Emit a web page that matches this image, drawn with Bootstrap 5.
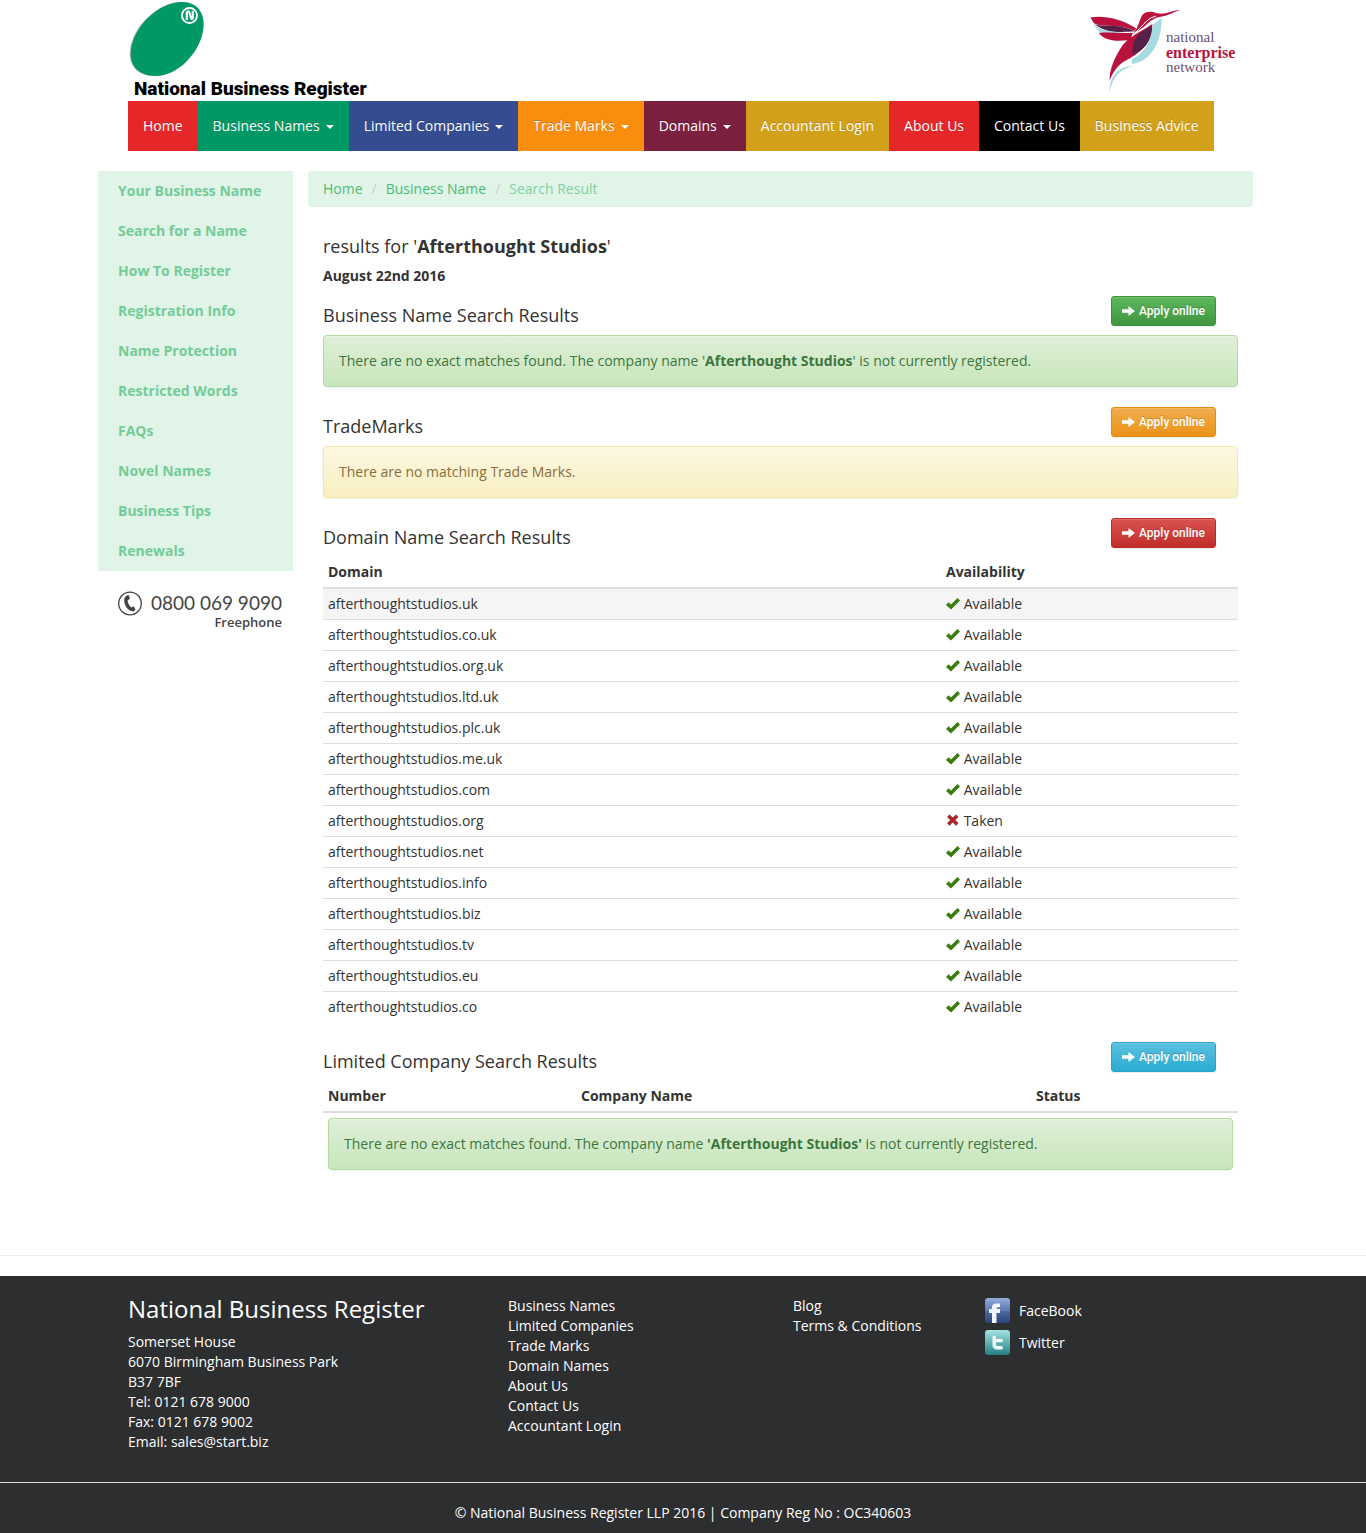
<!DOCTYPE html>
<html lang="en">
<head>
<meta charset="utf-8">
<meta name="viewport" content="width=device-width, initial-scale=1">
<title>National Business Register - Search Result</title>
<link rel="stylesheet" href="https://cdn.jsdelivr.net/npm/bootstrap@5.3.0/dist/css/bootstrap.min.css">
<style>
  body { font: 14px/20px "Open Sans", sans-serif; color: #333; }
  .container { max-width: 1170px; --bs-gutter-x: 30px; }
  .row { --bs-gutter-x: 30px; }
  a { text-decoration: none; }

  .masthead { height: 101px; padding: 0 18px 0 15px; }
  .brand { width: 245px; color: #000; }
  .brand svg { display: block; }
  .brand-name { font: 900 19px/22px Roboto, sans-serif; padding-left: 6px; white-space: nowrap; }
  .partner { width: 150px; gap: 6px; }
  .partner svg { overflow: visible; flex: none; }
  .partner-name { font: 15px/15px "Liberation Serif", serif; color: #6d4f6f; padding-top: 30px; }
  .partner-name strong { display: block; color: #b9123d; font-size: 16px; }

  .mainnav { margin: 0 15px 20px; }
  .mainnav .nav-link { padding: 15px; color: #fff; line-height: 20px; white-space: nowrap; border: 0; text-shadow: 0 -1px 0 rgba(0,0,0,.2); }
  .mainnav .dropdown-toggle::after { border-width: 4px 4px 0; margin-left: 6px; vertical-align: 2px; }
  .tone-red { background: #e52729; } .tone-green { background: #009966; }
  .tone-blue { background: #344c90; } .tone-orange { background: #f98e0e; }
  .tone-plum { background: #7b213f; } .tone-gold { background: #d3a019; }
  .tone-black { background: #000; }

  .sidenav { background: #e0f4e8; margin: 0 0 20px -15px; }
  .sidenav a { padding: 10px 20px; color: #74cb98; font-weight: 700; }
  .freephone { padding-left: 5px; gap: 9px; color: #444; }
  .phone-number { font: 19px/24px "Lato", sans-serif; white-space: nowrap; }
  .phone-label { font: 600 13px/14px "Open Sans", sans-serif; }

  .trail { background: #e0f4e8; border-radius: 4px; padding: 8px 15px; margin-bottom: 30px; --bs-breadcrumb-item-padding-x: 9px; --bs-breadcrumb-divider-color: #ccc; }
  .trail a { color: #4cbb73; }
  .trail .active { color: #82d0a0; }
  .results { padding: 0 15px; }
  h2, h4 { font-size: 18px; line-height: 19px; font-weight: 400; margin: 10px 0; }
  .section-top { padding-right: 22px; }
  .result-date { margin-bottom: 10px; }
  .btn-apply { font: 500 12px/18px Roboto, sans-serif; width: 105px; height: 30px; padding: 5px 0; color: #fff; border-radius: 3px; box-shadow: inset 0 1px 0 rgba(255,255,255,.15), 0 1px 1px rgba(0,0,0,.075); text-shadow: 0 -1px 0 rgba(0,0,0,.2); }
  .btn-apply:hover { color: #fff; }
  .btn-apply svg { vertical-align: -2px; }
  .apply-green { background: linear-gradient(#5cb85c,#419641); border-color: #3e8f3e; }
  .apply-orange { background: linear-gradient(#f0ad4e,#eb9316); border-color: #e38d13; }
  .apply-red { background: linear-gradient(#d9534f,#c12e2a); border-color: #b92c28; }
  .apply-blue { background: linear-gradient(#5bc0de,#2aabd2); border-color: #28a4c9; }
  .notice { padding: 15px; margin-bottom: 20px; border-radius: 4px; box-shadow: inset 0 1px 0 rgba(255,255,255,.25), 0 1px 2px rgba(0,0,0,.05); }
  .notice-ok { color: #3c763d; background: linear-gradient(#dff0d8,#c8e5bc); border-color: #b2dba1; }
  .notice-warn { color: #8a6d3b; background: linear-gradient(#fcf8e3,#f8efc0); border-color: #f5e79e; }
  .listing { margin-bottom: 20px; --bs-table-color: #333; }
  .listing > thead > tr > th { padding: 5px; border-bottom: 2px solid #ddd; }
  .listing > tbody > tr > td { padding: 5px; border-bottom: 0; }
  .listing > tbody > tr + tr > td { border-top: 1px solid #ddd; }
  .listing > tbody > tr.picked > td { background: #f5f5f5; }
  .w-domain { width: 618px; } .w-number { width: 253px; } .w-company { width: 455px; }
  .state-icon { vertical-align: -2px; }

  .footer-rule { margin: 40px 0 20px; border-top: 1px solid #eee; opacity: 1; }
  .site-footer { background: #2d2e30; color: #fff; }
  .site-footer a { color: #fff; }
  .site-footer h3 { font-size: 24px; line-height: 26px; font-weight: 400; margin: 0 0 10px; }
  .footer-cols { padding: 20px 15px 30px; }
  .copyright { border-top: 1px solid #ddd; padding: 20px 0 10px; }
  .social-links { gap: 2px; padding-left: 2px; }
  .social-links a { gap: 8px; height: 30px; }
</style>
<script defer src="https://cdn.jsdelivr.net/npm/bootstrap@5.3.0/dist/js/bootstrap.bundle.min.js"></script>
</head>
<body>
<svg width="0" height="0" class="position-absolute" aria-hidden="true">
  <defs>
    <symbol id="arrow" viewBox="0 0 14 12"><path fill="#fff" d="M0 4.200h6.500V1L13 6l-6.500 5V7.800H0z"/></symbol>
    <symbol id="tick" viewBox="0 0 14 14"><path fill="#3a7d0c" d="M0 8 2.600 5.200 5 7.600 11.500 1 14 3.600 5 12.600z"/></symbol>
    <symbol id="cross" viewBox="0 0 14 14"><path fill="#a52a2a" d="M1 2.900 3.500.4 6.800 3.600 10 .4 12.500 2.900 9.300 6.100 12.500 9.300 10 11.800 6.800 8.600 3.500 11.800 1 9.300 4.200 6.100z"/></symbol>
    <linearGradient id="fb" x2="0" y2="1"><stop stop-color="#91acdc"/><stop offset="1" stop-color="#2c4c86"/></linearGradient>
    <linearGradient id="tw" x2="0" y2="1"><stop stop-color="#a6e3e4"/><stop offset="1" stop-color="#237f84"/></linearGradient>
  </defs>
</svg>
<div class="container">
  <header class="masthead d-flex justify-content-between align-items-start">
    <a class="brand" href="#">
      <svg width="80" height="78" viewBox="0 0 80 78" aria-hidden="true">
        <path d="M53 2C70 2 78 14 75 31C71 54 48 76 27 76C9 76 0 65 2 50C5 25 31 2 53 2Z" fill="#b5b5b5"/>
        <path d="M54 2C70 2 78 14 75 31C71 54 49 76 28 76C10 76 1 65 3 50C6 25 32 2 54 2Z" fill="#096"/>
        <circle cx="61.500" cy="15.500" r="7.500" fill="none" stroke="#fff" stroke-width="1.900"/>
        <path d="M58.800 20V12.500Q60.500 10 61.500 13L63 18Q64.300 20.500 64.800 18V11" fill="none" stroke="#fff" stroke-width="2.200"/>
      </svg>
      <div class="brand-name">National Business Register</div>
    </a>
    <a class="partner d-flex" href="#">
      <svg width="75" height="98" viewBox="45 0 225 294" aria-hidden="true">
        <path fill="#a6dbe2" d="M64 62C80 88 115 100 190 96L92 100C82 88 72 78 64 62ZM275 53C276 105 256 182 186 192V177C230 158 246 110 248 74ZM187 198C142 213 128 235 118 277C118 232 142 199 187 198Z"/>
        <path fill="#b9123d" d="M62 52C100 46 150 54 198 85L195 93C150 72 105 82 76 73C69 67 65 60 62 52ZM86 99C120 95 158 101 189 98L180 120C140 124 106 125 86 99ZM187 103C205 87 207 60 217 45C227 32 248 34 262 40C285 45 302 32 331 30C308 38 288 49 268 51C243 56 234 73 213 87ZM247 72C246 140 197 166 158 187C141 199 127 220 119 243C117 208 135 171 156 138C174 112 213 95 247 72Z"/>
        <path fill="#552149" d="M76 74C108 81 146 69 195 94C160 96 114 102 76 74ZM246 78C247 122 220 155 187 163C186 117 204 96 246 78Z"/>
        <path d="M186 105C205 92 214 79 230 63Q242 52 258 48" fill="none" stroke="#fff" stroke-width="3"/>
      </svg>
      <div class="partner-name">national<strong>enterprise</strong>network</div>
    </a>
  </header>
  <nav class="mainnav d-flex" aria-label="Main">
    <a class="nav-link tone-red" href="#">Home</a>
    <button class="nav-link tone-green dropdown-toggle" type="button">Business Names</button>
    <button class="nav-link tone-blue dropdown-toggle" type="button">Limited Companies</button>
    <button class="nav-link tone-orange dropdown-toggle" type="button">Trade Marks</button>
    <button class="nav-link tone-plum dropdown-toggle" type="button">Domains</button>
    <a class="nav-link tone-gold" href="#">Accountant Login</a>
    <a class="nav-link tone-red" href="#">About Us</a>
    <a class="nav-link tone-black" href="#">Contact Us</a>
    <a class="nav-link tone-gold" href="#">Business Advice</a>
  </nav>
  <div class="row">
    <aside class="col-2 pe-0">
      <nav class="sidenav d-flex flex-column" aria-label="Business names">
        <a href="#">Your Business Name</a>
        <a href="#">Search for a Name</a>
        <a href="#">How To Register</a>
        <a href="#">Registration Info</a>
        <a href="#">Name Protection</a>
        <a href="#">Restricted Words</a>
        <a href="#">FAQs</a>
        <a href="#">Novel Names</a>
        <a href="#">Business Tips</a>
        <a href="#">Renewals</a>
      </nav>
      <div class="freephone d-flex align-items-start">
        <svg width="24" height="25" viewBox="0 0 24 25" aria-hidden="true">
          <circle cx="12" cy="12.500" r="11.300" fill="none" stroke="#444" stroke-width="1.300"/>
          <path fill="#444" d="M6.500 7 8 5 10.500 4 12 7.500 9.600 9.500C9.800 12.500 11.500 15 13.500 16.500L15.800 15.300 17.500 18.800 15.500 20.500C9 20 5 12.500 6.500 7Z"/>
        </svg>
        <div class="text-end"><div class="phone-number">0800 069 9090</div><div class="phone-label">Freephone</div></div>
      </div>
    </aside>
    <main class="col-10">
      <ol class="breadcrumb trail">
        <li class="breadcrumb-item"><a href="#">Home</a></li>
        <li class="breadcrumb-item"><a href="#">Business Name</a></li>
        <li class="breadcrumb-item active" aria-current="page">Search Result</li>
      </ol>
      <div class="results">
        <h2>results for '<strong>Afterthought Studios</strong>'</h2>
        <div class="result-date"><strong>August 22nd 2016</strong></div>

        <div class="section-top d-flex justify-content-between align-items-start">
          <h4>Business Name Search Results</h4>
          <button class="btn btn-apply apply-green" type="button"><svg width="14" height="12" aria-hidden="true"><use href="#arrow"/></svg> Apply online</button>
        </div>
        <div class="alert notice notice-ok">There are no exact matches found. The company name '<strong>Afterthought Studios</strong>' is not currently registered.</div>

        <div class="section-top d-flex justify-content-between align-items-start">
          <h4>TradeMarks</h4>
          <button class="btn btn-apply apply-orange" type="button"><svg width="14" height="12" aria-hidden="true"><use href="#arrow"/></svg> Apply online</button>
        </div>
        <div class="alert notice notice-warn">There are no matching Trade Marks.</div>

        <div class="section-top d-flex justify-content-between align-items-start">
          <h4>Domain Name Search Results</h4>
          <button class="btn btn-apply apply-red" type="button"><svg width="14" height="12" aria-hidden="true"><use href="#arrow"/></svg> Apply online</button>
        </div>
        <table class="table listing">
          <thead><tr><th class="w-domain">Domain</th><th>Availability</th></tr></thead>
          <tbody>
            <tr class="picked"><td>afterthoughtstudios.uk</td><td><svg class="state-icon" width="14" height="14" aria-hidden="true"><use href="#tick"/></svg> Available</td></tr>
            <tr><td>afterthoughtstudios.co.uk</td><td><svg class="state-icon" width="14" height="14" aria-hidden="true"><use href="#tick"/></svg> Available</td></tr>
            <tr><td>afterthoughtstudios.org.uk</td><td><svg class="state-icon" width="14" height="14" aria-hidden="true"><use href="#tick"/></svg> Available</td></tr>
            <tr><td>afterthoughtstudios.ltd.uk</td><td><svg class="state-icon" width="14" height="14" aria-hidden="true"><use href="#tick"/></svg> Available</td></tr>
            <tr><td>afterthoughtstudios.plc.uk</td><td><svg class="state-icon" width="14" height="14" aria-hidden="true"><use href="#tick"/></svg> Available</td></tr>
            <tr><td>afterthoughtstudios.me.uk</td><td><svg class="state-icon" width="14" height="14" aria-hidden="true"><use href="#tick"/></svg> Available</td></tr>
            <tr><td>afterthoughtstudios.com</td><td><svg class="state-icon" width="14" height="14" aria-hidden="true"><use href="#tick"/></svg> Available</td></tr>
            <tr><td>afterthoughtstudios.org</td><td><svg class="state-icon" width="14" height="14" aria-hidden="true"><use href="#cross"/></svg> Taken</td></tr>
            <tr><td>afterthoughtstudios.net</td><td><svg class="state-icon" width="14" height="14" aria-hidden="true"><use href="#tick"/></svg> Available</td></tr>
            <tr><td>afterthoughtstudios.info</td><td><svg class="state-icon" width="14" height="14" aria-hidden="true"><use href="#tick"/></svg> Available</td></tr>
            <tr><td>afterthoughtstudios.biz</td><td><svg class="state-icon" width="14" height="14" aria-hidden="true"><use href="#tick"/></svg> Available</td></tr>
            <tr><td>afterthoughtstudios.tv</td><td><svg class="state-icon" width="14" height="14" aria-hidden="true"><use href="#tick"/></svg> Available</td></tr>
            <tr><td>afterthoughtstudios.eu</td><td><svg class="state-icon" width="14" height="14" aria-hidden="true"><use href="#tick"/></svg> Available</td></tr>
            <tr><td>afterthoughtstudios.co</td><td><svg class="state-icon" width="14" height="14" aria-hidden="true"><use href="#tick"/></svg> Available</td></tr>
          </tbody>
        </table>

        <div class="section-top d-flex justify-content-between align-items-start">
          <h4>Limited Company Search Results</h4>
          <button class="btn btn-apply apply-blue" type="button"><svg width="14" height="12" aria-hidden="true"><use href="#arrow"/></svg> Apply online</button>
        </div>
        <table class="table listing">
          <thead><tr><th class="w-number">Number</th><th class="w-company">Company Name</th><th>Status</th></tr></thead>
          <tbody><tr><td colspan="3"><div class="alert notice notice-ok">There are no exact matches found. The company name <strong>'Afterthought Studios'</strong> is not currently registered.</div></td></tr></tbody>
        </table>
      </div>
    </main>
  </div>
</div>
<hr class="footer-rule">
<footer class="site-footer">
  <div class="container">
    <div class="footer-cols">
      <div class="row">
        <div class="col-4">
          <h3>National Business Register</h3>
          <address class="mb-0">Somerset House<br>6070 Birmingham Business Park<br>B37 7BF<br>Tel: 0121 678 9000<br>Fax: 0121 678 9002<br>Email: <a href="#">sales@start.biz</a></address>
        </div>
        <div class="col-3 d-flex flex-column align-items-start">
          <a href="#">Business Names</a>
          <a href="#">Limited Companies</a>
          <a href="#">Trade Marks</a>
          <a href="#">Domain Names</a>
          <a href="#">About Us</a>
          <a href="#">Contact Us</a>
          <a href="#">Accountant Login</a>
        </div>
        <div class="col-2 d-flex flex-column align-items-start">
          <a href="#">Blog</a>
          <a href="#">Terms &amp; Conditions</a>
        </div>
        <div class="col-3">
          <div class="social-links d-flex flex-column align-items-start">
            <a class="d-flex align-items-center" href="#">
              <svg width="26" height="26" viewBox="0 0 26 26" aria-hidden="true"><rect width="25" height="25" rx="3" fill="url(#fb)"/><path fill="#1d2f55" opacity=".2" d="M0 13h25v9a3 3 0 0 1-3 3H3a3 3 0 0 1-3-3z"/><path fill="#f2f6fc" d="M7 25V15H4v-4h3V9.500C7 6 9 5 15 5.500V9c-3-.3-3.500 0-3.500 2H15v4h-3.500v10z"/></svg>
              FaceBook</a>
            <a class="d-flex align-items-center" href="#">
              <svg width="26" height="26" viewBox="0 0 26 26" aria-hidden="true"><rect width="25" height="25" rx="3" fill="url(#tw)"/><path fill="#f2fcfc" d="M7.500 7Q7.500 5.500 9 5.500T11 7V9H16.500Q18 9 18 10.500T16.500 12.300H11V14C11 15.500 11.500 16 13 16H16.500Q18 16 18 17.700T16.500 19.500H13C9 19.500 7.500 18 7.500 14.500z"/></svg>
              Twitter</a>
          </div>
        </div>
      </div>
    </div>
  </div>
  <div class="copyright text-center">© National Business Register LLP 2016 | Company Reg No : OC340603</div>
</footer>
</body>
</html>
